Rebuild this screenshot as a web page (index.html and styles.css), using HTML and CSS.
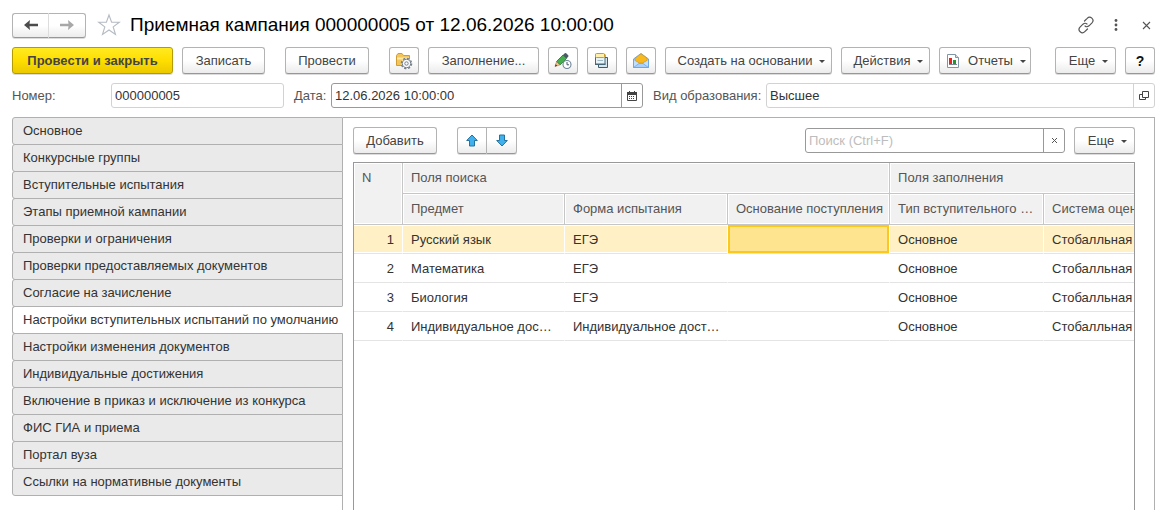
FILE: index.html
```html
<!DOCTYPE html>
<html lang="ru">
<head>
<meta charset="utf-8">
<title>Приемная кампания</title>
<link rel="stylesheet" href="styles.css">
</head>
<body>
<div class="window">
  <header class="titlebar">
    <div class="btn-group">
      <button class="btn nav-btn" type="button" aria-label="Назад"><svg width="16" height="12" viewBox="0 0 16 12"><path d="M1 6 7 1 6.500 4.700H15V7.300H6.500L7 11Z" fill="#4c4c4c"/></svg></button>
      <button class="btn nav-btn" type="button" aria-label="Вперед"><svg width="16" height="12" viewBox="0 0 16 12"><path d="M15 6 9 1 9.500 4.700H1V7.300H9.500L9 11Z" fill="#a8a8a8"/></svg></button>
    </div>
    <button class="plain star" type="button" aria-label="В избранное"><svg width="24" height="24" viewBox="0 0 24 24"><path d="M12 2 14.600 9.300H22.300L16.200 13.900 18.500 21.500 12 17 5.500 21.500 7.800 13.900 1.700 9.300H9.400Z" fill="none" stroke="#b4bbc3" stroke-width="1.100"/></svg></button>
    <h1 class="title">Приемная кампания 000000005 от 12.06.2026 10:00:00</h1>
    <div class="window-tools">
      <button class="plain" type="button" aria-label="Ссылка"><svg width="18" height="18" viewBox="0 0 18 18" fill="none" stroke="#555" stroke-width="1.200" stroke-linecap="round"><path d="M7.500 5 10.200 2.300A3.100 3.100 0 0 1 15 6.800L12 9.800A3.100 3.100 0 0 1 8 10"/><path d="M10.500 13 7.800 15.600A3.100 3.100 0 0 1 3 11.200L6 8.200A3.100 3.100 0 0 1 10 8"/></svg></button>
      <button class="plain" type="button" aria-label="Меню"><svg width="4" height="14" viewBox="0 0 4 14" fill="#555"><circle cx="2" cy="2.500" r="1.400"/><circle cx="2" cy="7" r="1.400"/><circle cx="2" cy="11.500" r="1.400"/></svg></button>
      <button class="plain" type="button" aria-label="Закрыть"><svg width="9" height="9" viewBox="0 0 9 9"><path d="M1 1 8 8M8 1 1 8" stroke="#555" stroke-width="1.100"/></svg></button>
    </div>
  </header>

  <div class="commands">
    <button class="btn primary" type="button">Провести и закрыть</button>
    <button class="btn save" type="button">Записать</button>
    <button class="btn post apart" type="button">Провести</button>
    <button class="btn icon-btn apart" type="button" aria-label="Настройки"><svg width="18" height="18" viewBox="0 0 18 18"><path d="M1.500 13.500V3.500L3 1.500H7L8.500 3.500H14.500V13.500Z" fill="#f3c65b" stroke="#cf9c35"/><path d="M2 6.500H14" stroke="#ffe9a6" stroke-width="2"/><circle cx="11.500" cy="11.500" r="5" fill="#fff" stroke="#77818c" stroke-width="1.600" stroke-dasharray="2.200 1.700"/><circle cx="11.500" cy="11.500" r="4.200" fill="#f7f9fa" stroke="#77818c"/><circle cx="11.500" cy="11.500" r="1.700" fill="#fff" stroke="#77818c"/></svg></button>
    <button class="btn fill" type="button">Заполнение...</button>
    <button class="btn icon-btn" type="button" aria-label="Отложить"><svg width="18" height="18" viewBox="0 0 18 18"><path d="M1 14.500 2.700 9.300 6.200 12.800Z" fill="#f2c58c" stroke="#9d7951" stroke-width=".6"/><path d="M1 14.500 1.700 12.300 3.200 13.800Z" fill="#333"/><path d="M2.700 9.300 9 3 12.500 6.500 6.200 12.800Z" fill="#45b04b" stroke="#25743a" stroke-width=".8"/><path d="M9 3 10.800 1.200Q11.500.600 12.200 1.200L14.200 3.200Q14.800 4 14.200 4.700L12.500 6.500Z" fill="#4c5a66"/><circle cx="13" cy="12.500" r="4" fill="#fff" stroke="#6e8398" stroke-width="1.100"/><path d="M13 10V12.800H15" fill="none" stroke="#43576b"/></svg></button>
    <button class="btn icon-btn" type="button" aria-label="Структура подчиненности"><svg width="18" height="18" viewBox="0 0 18 18"><path d="M5.500 5.500H14.500V15.500H5.500Z" fill="#d7e5ec" stroke="#3c5c70"/><path d="M2.500 2.500H12V12.500H2.500Z" fill="#e8f3f7" stroke="#48687a"/><path d="M2 11.500H12.500V13H2Z" fill="#48687a"/><path d="M4.500 8.500H10" stroke="#9eb8c6"/><rect x="2.500" y="1.500" width="9" height="4" rx="1" fill="#fff0ae" stroke="#d39b19"/></svg></button>
    <button class="btn icon-btn" type="button" aria-label="Письмо"><svg width="20" height="18" viewBox="0 0 20 18"><path d="M2.500 7 10 1.500 17.500 7V15.500H2.500Z" fill="#9dcafa" stroke="#71a7df"/><path d="M4 8.500V6.500L9 2.500Q10 1.800 11 2.500L16 6.500V8.500L11.500 11H8.500Z" fill="#f8b91f" stroke="#dc9911" stroke-width=".7"/><path d="M2.500 8 8 11.500H12L17.500 8V15.500H2.500Z" fill="#c1dfff"/><path d="M2.500 15.500 8 11.500H12L17.500 15.500" fill="#a8d0fa" stroke="#71a7df" stroke-width=".8"/><path d="M2.500 7.500V15.500H17.500V7.500" fill="none" stroke="#71a7df"/></svg></button>
    <button class="btn menu create" type="button">Создать на основании<span class="caret"></span></button>
    <button class="btn menu actions" type="button">Действия<span class="caret"></span></button>
    <button class="btn reports" type="button"><svg width="14" height="14" viewBox="0 0 14 14"><path d="M1.500.500H9.500L12.500 3.500V13.500H1.500Z" fill="#fff" stroke="#8195a8"/><path d="M9.500.500V3.500H12.500" fill="#d3dde6" stroke="#8195a8"/><path d="M3 4H6V10H3Z" fill="#e52620"/><path d="M7 6H10V10H7Z" fill="#24962c"/><path d="M3 10.500H11" stroke="#78889a"/></svg>Отчеты<span class="caret"></span></button>
    <span class="spacer"></span>
    <button class="btn menu more" type="button">Еще<span class="caret"></span></button>
    <button class="btn help" type="button" aria-label="Справка">?</button>
  </div>

  <div class="fields">
    <label class="number-label" for="number">Номер:</label>
    <div class="field soft number"><input id="number" type="text" value="000000005"></div>
    <label class="date-label" for="date">Дата:</label>
    <div class="field date"><input id="date" type="text" value="12.06.2026 10:00:00"><button class="field-btn" type="button" aria-label="Выбрать дату"><svg width="10" height="10" viewBox="0 0 10 10"><path d="M.500 1.500H9.500V9.500H.500Z" fill="#fff" stroke="#444"/><path d="M0 1H10V4H0Z" fill="#444"/><path d="M2.500 0V2M7.500 0V2" stroke="#444"/><path d="M2 5.500H8M2 7.500H8" stroke="#444" stroke-dasharray="1 1"/></svg></button></div>
    <label class="kind-label" for="kind">Вид образования:</label>
    <div class="field soft kind"><input id="kind" type="text" value="Высшее"><button class="field-btn" type="button" aria-label="Открыть"><svg width="10" height="10" viewBox="0 0 10 10" fill="none" stroke="#444"><path d="M3.500.500H9.500V6.500H3.500Z"/><path d="M3 3.500H.500V8.500H6.500V7"/></svg></button></div>
  </div>

  <main class="content">
    <nav class="tabs" aria-label="Разделы">
      <button class="tab" type="button">Основное</button>
      <button class="tab" type="button">Конкурсные группы</button>
      <button class="tab" type="button">Вступительные испытания</button>
      <button class="tab" type="button">Этапы приемной кампании</button>
      <button class="tab" type="button">Проверки и ограничения</button>
      <button class="tab" type="button">Проверки предоставляемых документов</button>
      <button class="tab" type="button">Согласие на зачисление</button>
      <button class="tab selected" type="button" aria-current="page">Настройки вступительных испытаний по умолчанию</button>
      <button class="tab" type="button">Настройки изменения документов</button>
      <button class="tab" type="button">Индивидуальные достижения</button>
      <button class="tab" type="button">Включение в приказ и исключение из конкурса</button>
      <button class="tab" type="button">ФИС ГИА и приема</button>
      <button class="tab" type="button">Портал вуза</button>
      <button class="tab" type="button">Ссылки на нормативные документы</button>
      <div class="tabs-rest"></div>
    </nav>
    <section class="panel">
      <div class="panel-tools">
        <button class="btn add" type="button">Добавить</button>
        <div class="btn-group moves">
          <button class="btn move-btn" type="button" aria-label="Вверх"><svg width="12" height="13" viewBox="0 0 12 13"><path d="M6 1 11.300 6.500H8.500V12H3.500V6.500H.700Z" fill="#41b1ee" stroke="#23729f"/></svg></button>
          <button class="btn move-btn" type="button" aria-label="Вниз"><svg width="12" height="13" viewBox="0 0 12 13"><path d="M6 12 11.300 6.500H8.500V1H3.500V6.500H.700Z" fill="#41b1ee" stroke="#23729f"/></svg></button>
        </div>
        <span class="spacer"></span>
        <div class="field search"><input type="text" placeholder="Поиск (Ctrl+F)" aria-label="Поиск"><button class="field-btn" type="button" aria-label="Очистить"><svg width="7" height="7" viewBox="0 0 7 7"><path d="M1 1 6 6M6 1 1 6" stroke="#555"/></svg></button></div>
        <button class="btn menu more" type="button">Еще<span class="caret"></span></button>
      </div>
      <div class="grid">
        <table>
          <colgroup><col class="col-n"><col class="col-subject"><col class="col-form"><col class="col-base"><col class="col-type"><col class="col-system"></colgroup>
          <thead>
            <tr><th rowspan="2" class="n">N</th><th colspan="3">Поля поиска</th><th colspan="2">Поля заполнения</th></tr>
            <tr><th>Предмет</th><th>Форма испытания</th><th>Основание поступления</th><th>Тип вступительного …</th><th>Система оценивания</th></tr>
          </thead>
          <tbody>
            <tr class="current"><td>1</td><td>Русский язык</td><td>ЕГЭ</td><td class="active"></td><td>Основное</td><td>Стобалльная</td></tr>
            <tr><td>2</td><td>Математика</td><td>ЕГЭ</td><td></td><td>Основное</td><td>Стобалльная</td></tr>
            <tr><td>3</td><td>Биология</td><td>ЕГЭ</td><td></td><td>Основное</td><td>Стобалльная</td></tr>
            <tr><td>4</td><td>Индивидуальное дос…</td><td>Индивидуальное дост…</td><td></td><td>Основное</td><td>Стобалльная</td></tr>
          </tbody>
        </table>
      </div>
    </section>
  </main>
</div>
</body>
</html>
```
FILE: styles.css
```css
* { box-sizing: border-box; }

body {
  margin: 0;
  background: #fff;
  color: #333;
  font: 13px/16px "Liberation Sans", Arial, sans-serif;
}

button, input { font: inherit; color: inherit; }
svg { display: block; flex: none; }

.window {
  display: flex;
  flex-direction: column;
  height: 100vh;
  padding: 12px 19px 0 12px;
  overflow: hidden;
}

.spacer { flex: 1; }

.btn {
  display: flex;
  flex: none;
  align-items: center;
  justify-content: center;
  height: 27px;
  padding: 0;
  border: 1px solid #b3b3b3;
  border-bottom-color: #979797;
  border-radius: 3px;
  background: linear-gradient(#fff 50%, #ececec);
  box-shadow: 0 1px 0 #dcdcdc;
  color: #444;
  white-space: nowrap;
}

.btn-group { display: flex; }
.btn-group .btn:first-child { border-radius: 3px 0 0 3px; }
.btn-group .btn:last-child { border-left: 0; border-radius: 0 3px 3px 0; }

.plain { padding: 0; border: 0; background: none; }

.titlebar { display: flex; align-items: center; height: 26px; margin-bottom: 9px; }
.nav-btn { width: 37px; height: 25px; }
.nav-btn:first-child { border-right-color: #ddd; }
.star { margin: 0 9px 0 11px; }
.title {
  flex: 1;
  margin: 0;
  color: #000;
  font-size: 19px;
  font-weight: 400;
  line-height: 24px;
  white-space: nowrap;
}
.window-tools { display: flex; align-items: center; gap: 12px; }
.window-tools .plain { display: flex; justify-content: center; width: 18px; }

.commands { display: flex; gap: 9px; margin-bottom: 9px; }
.primary {
  width: 161px;
  border-color: #b39b00;
  background: linear-gradient(#ffea21, #ffde00 50%, #ebc900);
  font-weight: 700;
}
.save { width: 83px; }
.post { width: 84px; }
.apart { margin-left: 11px; }
.icon-btn { width: 30px; }
.fill { width: 111px; }
.menu { padding-left: 6px; }
.create { width: 167px; }
.actions { width: 89px; }
.reports { width: 92px; padding-left: 2px; }
.reports svg { margin-right: 8px; }
.more { width: 61px; }
.help { width: 30px; color: #111; font-size: 14px; font-weight: 700; }

.caret {
  margin: 2px 0 0 7px;
  border: 3px solid transparent;
  border-top-color: #444;
  border-bottom: 0;
}

.fields { display: flex; align-items: center; margin-bottom: 9px; }
.fields label { flex: none; color: #555; }
.number-label { width: 99px; }
.date-label { width: 37px; margin-left: 10px; }
.kind-label { width: 113px; margin-left: 10px; }
.field {
  display: flex;
  height: 25px;
  border: 1px solid #999;
  border-radius: 3px;
  background: #fff;
}
.field input {
  flex: 1;
  min-width: 0;
  padding: 0 3px;
  border: 0;
  outline: 0;
  background: none;
}
.field input::placeholder { color: #bdbdbd; opacity: 1; }
.field-btn {
  display: flex;
  align-items: center;
  justify-content: center;
  width: 21px;
  padding: 0;
  border: 0;
  border-left: 1px solid #999;
  background: none;
}
.soft, .soft .field-btn { border-color: #d2d2d2; }
.number { width: 173px; }
.date { width: 312px; }
.kind { flex: 1; }

.content { display: flex; flex: 1; min-height: 0; }
.tabs { display: flex; flex: none; flex-direction: column; width: 331px; }
.tab {
  flex: none;
  height: 28px;
  margin-bottom: -1px;
  padding: 0 10px;
  border: 1px solid #b0b0b0;
  border-radius: 3px 0 0 3px;
  background: #eaeaea;
  text-align: left;
  white-space: nowrap;
}
.selected { border-right-color: #fff; background: #fff; padding-right: 0; }
.tabs-rest { flex: 1; border-right: 1px solid #b0b0b0; }

.panel {
  display: flex;
  flex: 1;
  flex-direction: column;
  min-width: 0;
  padding: 9px 19px 0 10px;
  border: solid #b0b0b0;
  border-width: 1px 1px 0 0;
}
.panel-tools { display: flex; align-items: center; margin-bottom: 8px; }
.add { width: 84px; }
.moves { margin-left: 20px; }
.move-btn { width: 30px; }
.search { width: 260px; margin-right: 9px; }

.grid {
  flex: 1;
  min-height: 0;
  border: 1px solid #999;
  border-bottom: 0;
  overflow: hidden;
}
table { width: 850px; border-spacing: 0; table-layout: fixed; }
.col-n { width: 49px; }
.col-subject { width: 162px; }
.col-form { width: 163px; }
.col-base { width: 162px; }
.col-type { width: 154px; }
th, td {
  padding: 0 4px 0 8px;
  border: solid #c6c6c6;
  border-width: 0 1px 1px 0;
  overflow: hidden;
  text-align: left;
  text-overflow: ellipsis;
  white-space: nowrap;
}
th {
  height: 31px;
  background: #f1f1f1;
  box-shadow: inset 0 0 0 1px #fff;
  color: #555;
  font-weight: 400;
}
th.n { padding-top: 7px; vertical-align: top; }
td {
  height: 29px;
  padding-top: 2px;
  border-color: #fff #fff #e4e4e4;
  box-shadow: inset 0 1px 0 #fff, inset 0 -1px 0 #fff;
}
td:first-child { padding-right: 8px; text-align: right; }
.current td { background: #fff1c5; }
.current .active {
  background: #ffe48f;
  box-shadow: inset 0 0 0 2px #fbc91d;
}
```
